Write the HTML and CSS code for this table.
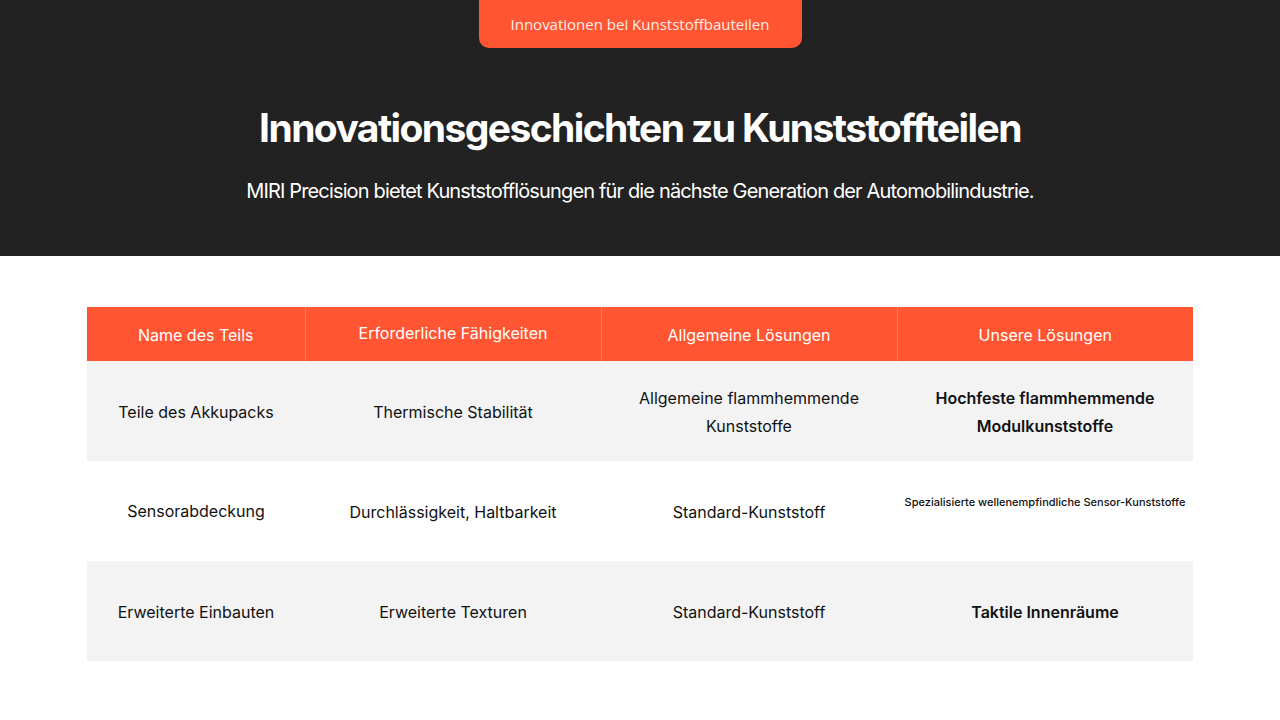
FILE: index.html
```html
<!DOCTYPE html>
<html lang="de">
<head>
<meta charset="utf-8">
<title>Innovationsgeschichten zu Kunststoffteilen</title>
<link rel="stylesheet" href="styles.css">
</head>
<body>
<header class="hero">
  <a class="pill" href="#">Innovationen bei Kunststoffbauteilen</a>
  <h1 class="hero-title">Innovationsgeschichten zu Kunststoffteilen</h1>
  <p class="hero-sub">MIRI Precision bietet Kunststofflösungen für die nächste Generation der Automobilindustrie.</p>
</header>
<main class="content">
  <table class="parts">
    <colgroup>
      <col class="c1"><col class="c2"><col class="c3"><col class="c4">
    </colgroup>
    <thead>
      <tr>
        <th>Name des Teils</th>
        <th class="th-up">Erforderliche Fähigkeiten</th>
        <th>Allgemeine Lösungen</th>
        <th>Unsere Lösungen</th>
      </tr>
    </thead>
    <tbody>
      <tr class="shade">
        <td>Teile des Akkupacks</td>
        <td>Thermische Stabilität</td>
        <td>Allgemeine flammhemmende<br>Kunststoffe</td>
        <td class="strong">Hochfeste flammhemmende<br>Modulkunststoffe</td>
      </tr>
      <tr>
        <td class="up1">Sensorabdeckung</td>
        <td>Durchlässigkeit, Haltbarkeit</td>
        <td>Standard-Kunststoff</td>
        <td class="tiny">Spezialisierte wellenempfindliche Sensor-Kunststoffe</td>
      </tr>
      <tr class="shade">
        <td>Erweiterte Einbauten</td>
        <td>Erweiterte Texturen</td>
        <td>Standard-Kunststoff</td>
        <td class="strong">Taktile Innenräume</td>
      </tr>
    </tbody>
  </table>
</main>
</body>
</html>
```

FILE: styles.css
```css
* { box-sizing: border-box; }
html, body { margin: 0; padding: 0; }
body {
  background: #ffffff;
  font-family: "Inter", "Liberation Sans", sans-serif;
  color: #111111;
}
.hero {
  background: #222222;
  height: 256px;
  display: flex;
  flex-direction: column;
  align-items: center;
}
.pill {
  display: block;
  width: 323px;
  height: 48px;
  line-height: 48px;
  text-align: center;
  background: #ff5533;
  color: #ffeee8;
  font-family: "Open Sans", "Liberation Sans", sans-serif;
  font-size: 15px;
  text-decoration: none;
  border-radius: 0 0 10px 10px;
}
.hero-title {
  margin: 56px 0 0;
  color: #ffffff;
  font-size: 39px;
  font-weight: 700;
  line-height: 48px;
  letter-spacing: -1.6px;
}
.hero-sub {
  margin: 25px 0 0;
  color: #ffffff;
  font-size: 20px;
  line-height: 28px;
  letter-spacing: -0.85px;
}
.content {
  padding: 51px 87px 0;
}
.parts {
  width: 1106px;
  border-collapse: collapse;
  table-layout: fixed;
}
.c1 { width: 218px; }
.c2, .c3, .c4 { width: 296px; }
.parts th {
  background: #ff5533;
  color: #ffffff;
  font-weight: 400;
  font-size: 16px;
  height: 54px;
  padding: 2px 8px 0;
  text-align: center;
  border-left: 1px solid #ff7a5e;
}
.parts th:first-child { border-left: none; }
.parts th.th-up { padding: 0 8px 2px; }
.parts td {
  height: 100px;
  text-align: center;
  font-size: 16px;
  line-height: 28px;
  padding: 2px 8px 0;
  color: #111111;
}
.parts tr.shade td { background: #f3f3f3; }
.parts td.strong { font-weight: 600; }
.parts td.up1 { padding: 0 8px; }
.parts td.tiny {
  font-size: 11px;
  font-weight: 500;
  line-height: 16px;
  padding: 0 4px 18px;
}
```
